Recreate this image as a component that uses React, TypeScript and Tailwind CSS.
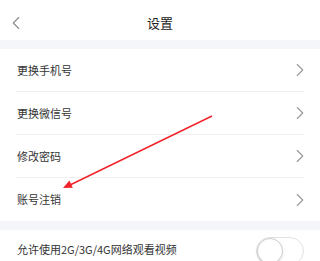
import { ChevronLeft, ChevronRight } from 'lucide-react';

const rows = ['更换手机号', '更换微信号', '修改密码', '账号注销'];

// 红色标注箭头
function Annotation() {
  return (
    <svg className="absolute inset-0 pointer-events-none" width="320" height="261" viewBox="0 0 320 261">
      <line x1="212" y1="116" x2="70" y2="185" stroke="#f2222b" strokeWidth="1.4" />
      <polygon points="63,188 72.8,187.7 69.4,180.5" fill="#f2222b" />
    </svg>
  );
}

export default function App() {
  return (
    <div
      className="relative w-[320px] h-[261px] overflow-hidden bg-white text-[#333]"
      style={{ fontFamily: '"Noto Sans CJK SC", "Noto Sans", sans-serif' }}
    >
      {/* 顶部导航 */}
      <div className="relative h-[40px] flex items-center justify-center pt-[6px]">
        <ChevronLeft className="absolute left-[5px] top-[12px] size-[22px] text-[#8a8a8a]" strokeWidth={1.2} />
        <span className="text-[13px] text-[#222]">设置</span>
      </div>

      <div className="h-[9px] bg-[#f5f6fa]" />

      {rows.map((label, i) => (
        <div key={label} className="mx-4">
          <div
            className={`h-[43px] flex items-center justify-between ${
              i < rows.length - 1 ? 'border-b border-[#eeeeee]' : ''
            }`}
          >
            <span className="text-[11px] pl-[1px]">{label}</span>
            <ChevronRight className="size-[22px] text-[#999] -mr-[7px]" strokeWidth={1.2} />
          </div>
        </div>
      ))}

      <div className="h-[9px] bg-[#f5f6fa]" />

      <div className="mx-4 h-[38px] flex items-center justify-between">
        <span className="text-[11px] pl-[1px]">允许使用2G/3G/4G网络观看视频</span>
        <div className="relative w-[48px] h-[28px] rounded-full border border-[#e3e3e3] bg-white -mb-[4px]">
          <div className="absolute left-0 top-0 w-[26px] h-[26px] rounded-full border border-[#cfcfcf] bg-white shadow-sm" />
        </div>
      </div>

      <Annotation />
    </div>
  );
}
